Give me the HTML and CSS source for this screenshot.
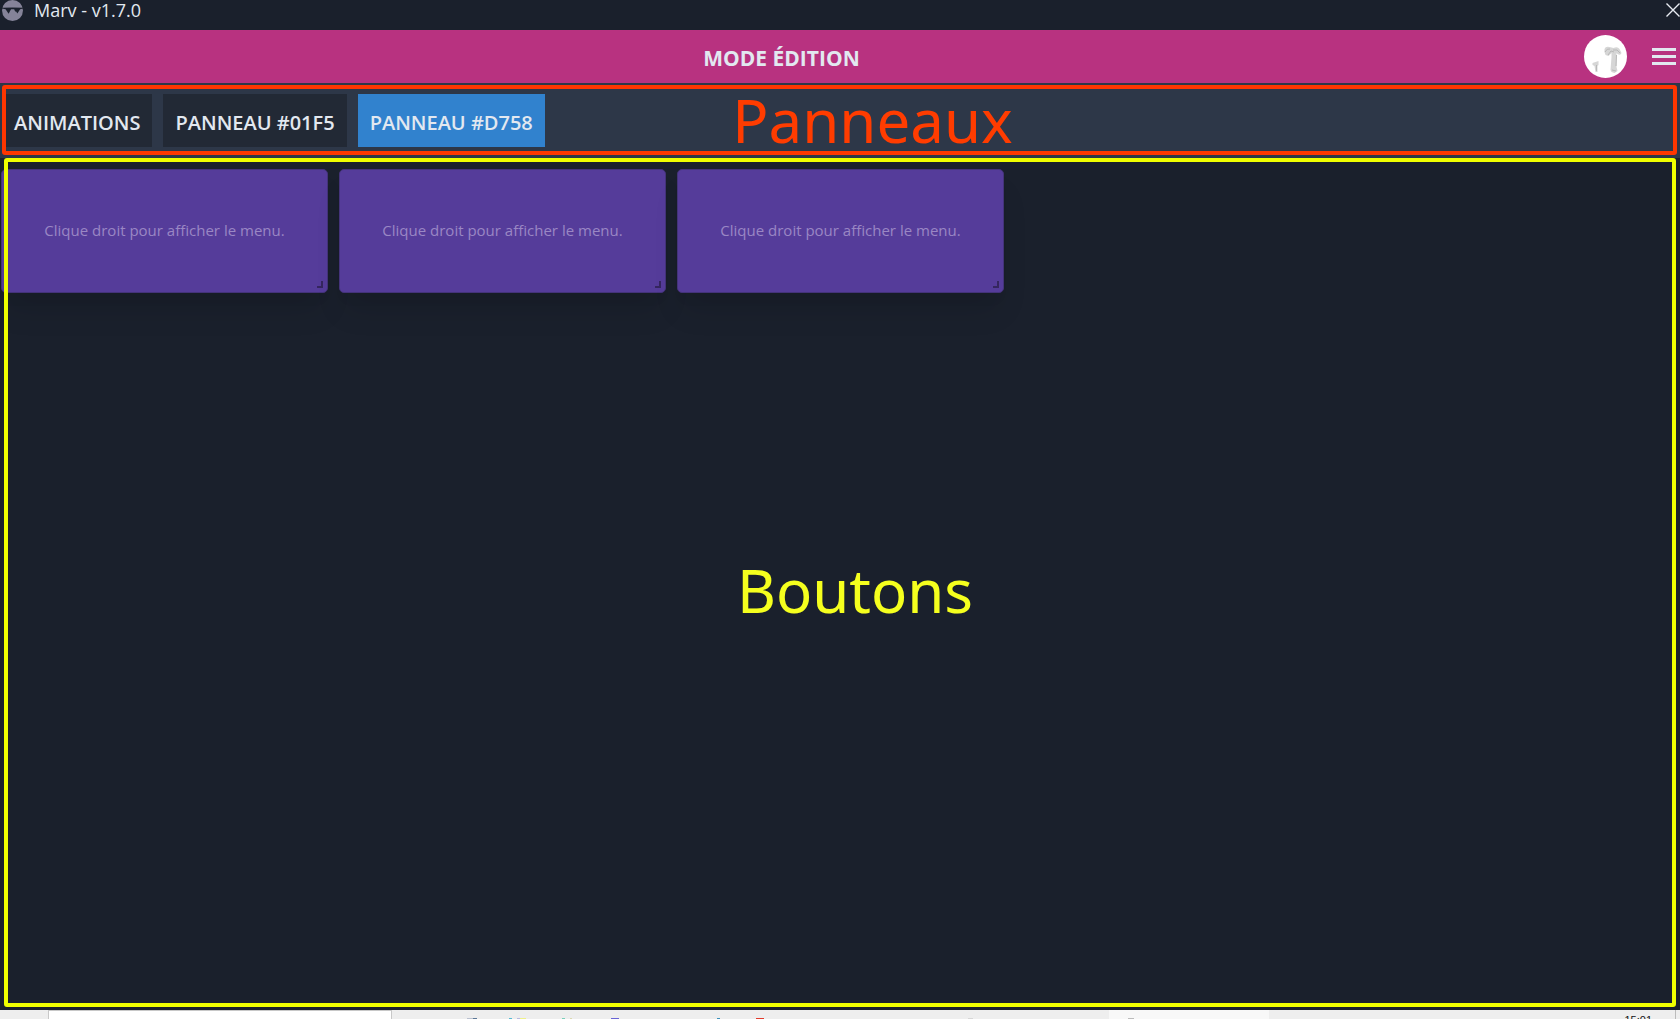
FILE: index.html
```html
<!DOCTYPE html>
<html lang="fr">
<head>
<meta charset="utf-8">
<title>Marv - v1.7.0</title>
<link rel="stylesheet" href="styles.css">
</head>
<body>
<div class="titlebar">
  <svg class="logo" viewBox="0 0 20 20" aria-hidden="true"><circle cx="10" cy="10" r="10" fill="#858399"/><path d="M0 7.400Q10 6.800 20 7.400L20 8.200 17.300 8.700 14.600 12.800 13.300 10.600 12.600 11.200 11.600 8.800 8.600 8.800 6.300 13 3.400 8.700 0 8.200Z" fill="#1a202c"/></svg>
  <span class="app-name">Marv - v1.7.0</span>
  <button class="close" aria-label="Fermer"><svg viewBox="0 0 14 14"><path d="M.5 .5 13.5 13.5M13.5 .5 .5 13.5" stroke="#e8ecf2" stroke-width="1.4" fill="none"/></svg></button>
</div>
<header class="header">
  <h1 class="mode">MODE ÉDITION</h1>
  <div class="account">
    <svg class="avatar" viewBox="0 0 43 43" role="img" aria-label="Profil"><circle cx="21.500" cy="21.500" r="21.500" fill="#fff"/><g fill="#d6d6d6"><path d="M20.500 14q1-3 5-2l4 1q4-2 6 1l2 4q-1 3-4 1l-1-1q0 8 0 14l1 4-3 2-3-1-1-2 1-13 0-4-3 3-3-1-1-3z"/><path d="M8.500 28l6-2 0 4-1 1 0 6-2 0-1-6-2-1z"/></g><g fill="none" stroke="#b8b8b8"><path d="M21 17q2-4 5-3M24 20l3-4 3 1M29 15l4 0 3 3M32.500 20l-.5 11M28 35l4 1M12.500 30v6"/></g></svg>
    <button class="burger" aria-label="Menu"><i></i><i></i><i></i></button>
  </div>
</header>
<nav class="panels">
  <button class="tab">ANIMATIONS</button>
  <button class="tab">PANNEAU #01F5</button>
  <button class="tab active">PANNEAU #D758</button>
  <div class="note note-panels"><span>Panneaux</span></div>
</nav>
<main class="board">
  <button class="card">Clique droit pour afficher le menu.</button>
  <button class="card">Clique droit pour afficher le menu.</button>
  <button class="card">Clique droit pour afficher le menu.</button>
  <div class="note note-buttons"><span>Boutons</span></div>
</main>
<footer class="taskbar">
  <div class="search"></div>
  <svg class="apps" viewBox="0 0 580 9" aria-hidden="true"><path fill="#b9c0cf" d="M47 8h10v1H47z"/><path fill="#5b7796" d="M53 8h4v1h-4z"/><path fill="#54b9d2" d="M89 8h3v1h-3z"/><path fill="#b7b9df" d="M97 8h4v1h-4z"/><path fill="#eef08a" d="M100 8h6v1h-6z"/><path fill="#79cfba" d="M142 8h3v1h-3z"/><path fill="#dbd8b0" d="M150 8h2v1h-2z"/><path fill="#6964d6" d="M191 8h8v1h-8z"/><path fill="#3c91bb" d="M297 8h3v1h-3z"/><path fill="#e23b2b" d="M336 8h8v1h-8z"/><path fill="#d6d6d6" d="M548 8h5v1h-5z"/></svg>
  <div class="task"><i></i></div>
  <time class="clock">15:01</time>
</footer>
</body>
</html>
```
FILE: styles.css
```css
*, *::after { box-sizing: border-box; }

body {
  margin: 0;
  height: 100vh;
  display: flex;
  flex-direction: column;
  overflow: hidden;
  background: #1a202c;
  color: #e2e8f0;
  font-family: "Open Sans", "Noto Sans", sans-serif;
}

button {
  margin: 0;
  padding: 0;
  border: 0;
  background: none;
  color: inherit;
  font: inherit;
}

svg { display: block; }

.titlebar {
  height: 30px;
  flex: none;
  display: flex;
  align-items: flex-start;
  padding-left: 2px;
}

.logo { width: 21px; height: 21px; }

.app-name {
  margin-left: 11px;
  font-size: 18px;
  line-height: 20px;
}

.close { margin: 3px 0 0 auto; }
.close svg { width: 14px; height: 14px; }

.header {
  height: 53px;
  flex: none;
  display: flex;
  align-items: center;
  background: #b83280;
}

.mode {
  flex: 1;
  margin: 0;
  padding-top: 3px;
  text-align: center;
  font-size: 21px;
  line-height: 28px;
  font-weight: 700;
}

.account {
  display: flex;
  align-items: center;
  gap: 25px;
  padding: 0 4px 0 21px;
}

.avatar { width: 43px; height: 43px; }

.burger {
  width: 24px;
  display: flex;
  flex-direction: column;
  gap: 4px;
}

.burger i { height: 3px; background: #e2e8f0; }

.panels {
  position: relative;
  flex: none;
  display: flex;
  gap: 11px;
  padding: 11px 2px;
  background: #2d3748;
}

.tab {
  height: 53px;
  padding: 4px 12px 0;
  background: #222935;
  font-size: 20px;
  line-height: 28px;
  font-weight: 600;
}

.tab.active { background: #3182ce; }

.board {
  position: relative;
  flex: 1;
  display: flex;
  align-items: flex-start;
  gap: 11px;
  padding: 11px 1px;
}

.card {
  position: relative;
  width: 327px;
  height: 124px;
  padding-bottom: 2px;
  border: 1px solid #44337a;
  border-radius: 5px;
  background: #553c9a;
  box-shadow: 0 22px 28px -5px rgba(0, 0, 0, .1), 0 11px 11px -5px rgba(0, 0, 0, .04);
  color: #9a87c4;
  font-size: 15px;
  line-height: 22px;
}

.card::after {
  content: "";
  position: absolute;
  right: 4px;
  bottom: 4px;
  width: 6px;
  height: 7px;
  border: solid #35265f;
  border-width: 0 2px 2px 0;
}

.note {
  position: absolute;
  display: flex;
  align-items: center;
  justify-content: center;
  border: 4px solid;
  border-radius: 3px;
  font-family: "Noto Sans", sans-serif;
  font-size: 60px;
  line-height: 60px;
  pointer-events: none;
}

.note-panels {
  inset: 2px 3px 3px 2px;
  padding-left: 66px;
  border-color: #ff3600;
  color: #ff3c00;
}

.note-buttons {
  inset: 0 4px 3px;
  padding: 14px 0 0 30px;
  border-color: #f0ff00;
  color: #f5ff1e;
}

.taskbar {
  height: 9px;
  flex: none;
  display: flex;
  overflow: hidden;
  background: #eee;
  color: #111;
}

.search {
  width: 344px;
  margin-left: 48px;
  flex: none;
  border: 1px solid #c8c8c8;
  border-bottom: 0;
  background: #fff;
}

.apps { width: 580px; height: 9px; margin: 0 109px 0 28px; flex: none; }

.task {
  width: 160px;
  padding: 8px 0 0 19px;
  background: #f8f8f8;
}

.task i { display: block; width: 6px; height: 1px; background: #bbb; }

.clock {
  margin-left: auto;
  margin-right: 4px;
  padding: 2px 23px 0 0;
  border-right: 1px solid #bbb;
  font-family: "Liberation Sans", sans-serif;
  font-size: 11px;
  line-height: 16px;
}
```
